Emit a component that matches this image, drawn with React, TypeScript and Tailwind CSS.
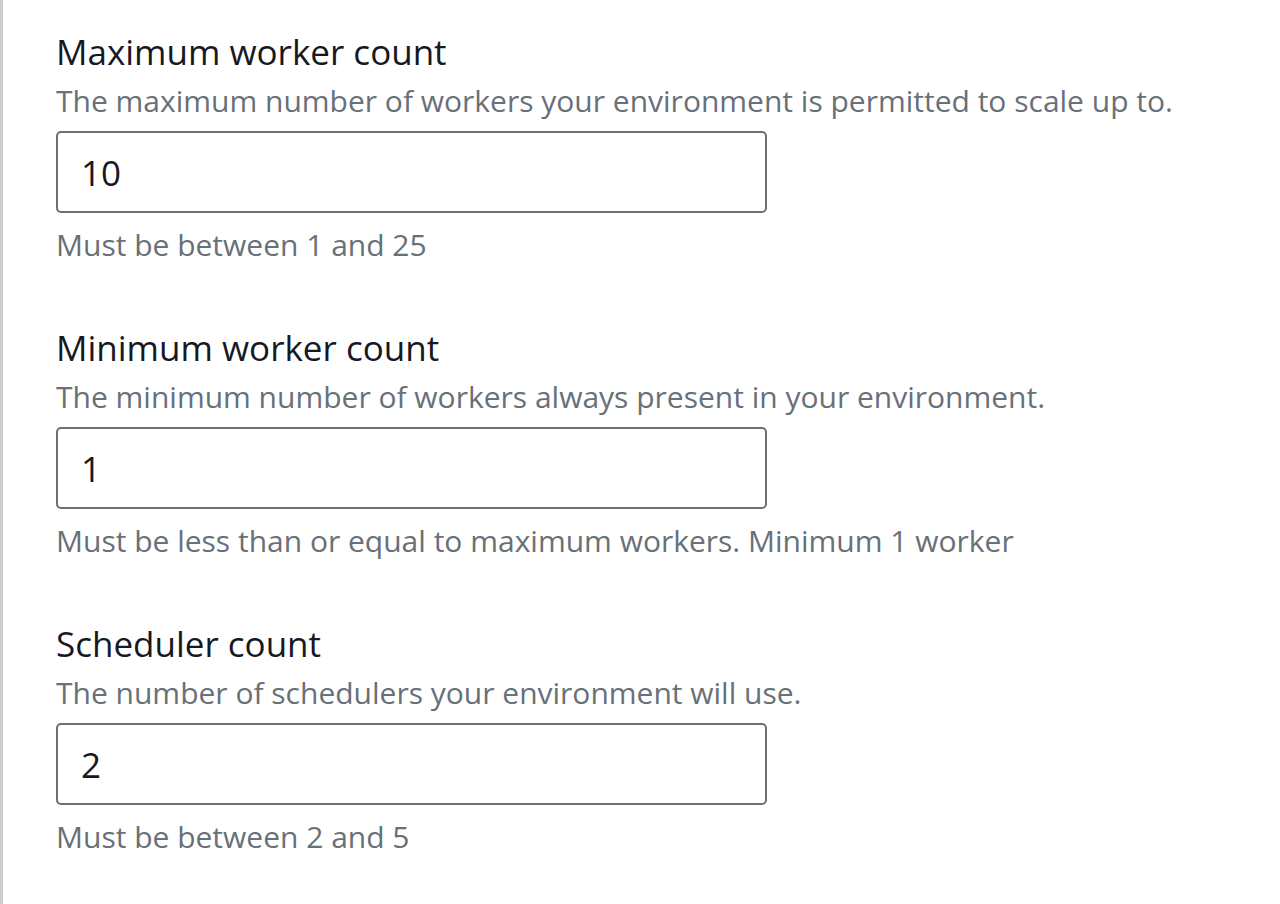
const fields = [
  {
    label: 'Maximum worker count',
    description: 'The maximum number of workers your environment is permitted to scale up to.',
    value: '10',
    hint: 'Must be between 1 and 25',
  },
  {
    label: 'Minimum worker count',
    description: 'The minimum number of workers always present in your environment.',
    value: '1',
    hint: 'Must be less than or equal to maximum workers. Minimum 1 worker',
  },
  {
    label: 'Scheduler count',
    description: 'The number of schedulers your environment will use.',
    value: '2',
    hint: 'Must be between 2 and 5',
  },
]

export default function App() {
  return (
    <div
      className="w-[1280px] h-[904px] bg-white overflow-hidden flex"
      style={{ fontFamily: '"Open Sans", "Noto Sans", Arial, sans-serif' }}
    >
      {/* left edge of the container */}
      <div className="w-[3px] bg-[#c9cfd1] shrink-0" />

      <div className="flex flex-col gap-[55px] pl-[53px] pt-[24px]">
        {fields.map((f) => (
          <div key={f.label} className="flex flex-col">
            <label className="text-[35px] leading-[56px] text-[#16191f]">{f.label}</label>
            <p className="text-[30px] leading-[41px] text-[#687078]">{f.description}</p>
            <input
              readOnly
              value={f.value}
              className="mt-[10px] w-[711px] h-[82px] border-[2.5px] border-[#687078] rounded-[5px] px-[23px] text-[35px] text-[#16191f] outline-none"
            />
            <p className="mt-[11px] text-[30px] leading-[41px] text-[#687078]">{f.hint}</p>
          </div>
        ))}
      </div>
    </div>
  )
}
